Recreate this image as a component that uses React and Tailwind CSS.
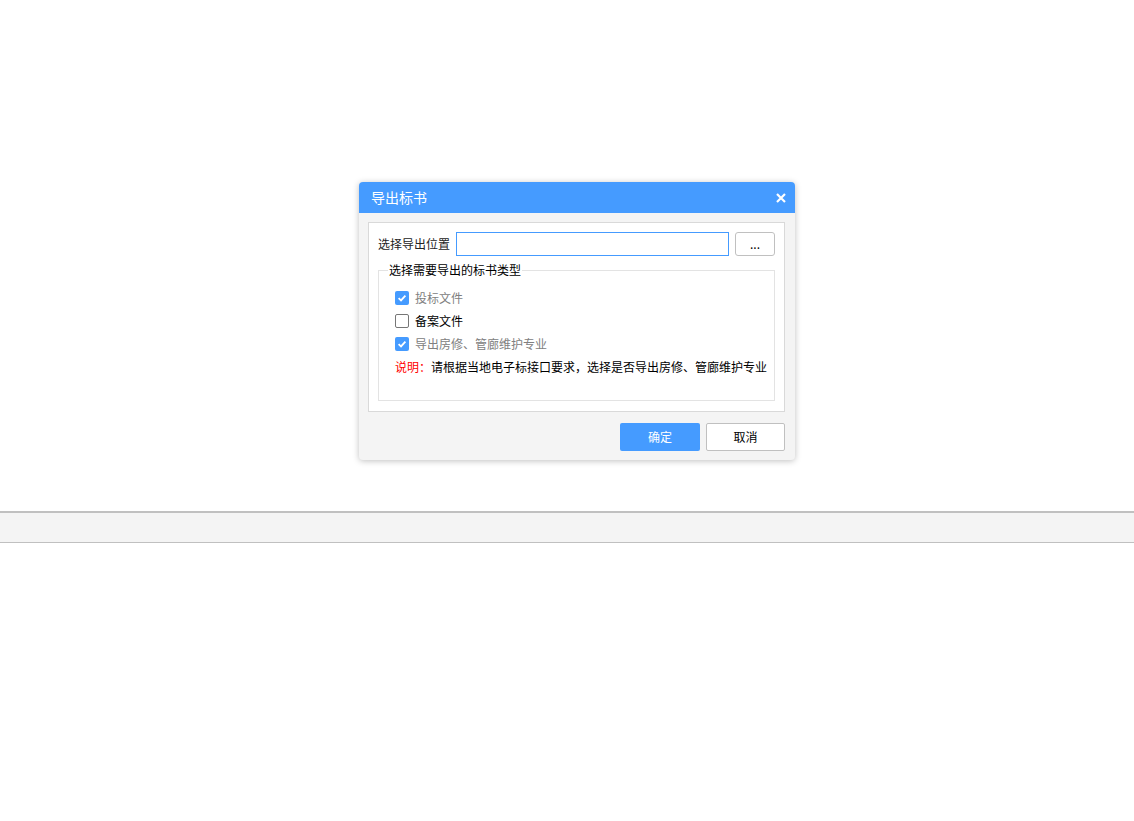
import { useState } from 'react';

const FONT = { fontFamily: '"Microsoft YaHei", "Noto Sans CJK SC", "Noto Sans", sans-serif' };

function Checkbox({ checked, onChange, label }) {
  return (
    <label className="flex items-center h-[23px] cursor-pointer select-none" onClick={onChange}>
      {checked ? (
        <span className="w-[14px] h-[14px] rounded-[2px] bg-[#459bff] flex items-center justify-center">
          <svg width="10" height="10" viewBox="0 0 10 10">
            <path d="M1.6 5.2 L4 7.4 L8.4 2.6" fill="none" stroke="#fff" strokeWidth="1.8" />
          </svg>
        </span>
      ) : (
        <span className="w-[14px] h-[14px] rounded-[2px] border border-[#767676] bg-white" />
      )}
      <span className={`ml-[6px] text-[12px] ${checked ? 'text-[#808080]' : 'text-black'}`}>{label}</span>
    </label>
  );
}

export default function App() {
  const [types, setTypes] = useState({ bid: true, record: false, house: true });
  const toggle = (k) => setTypes((t) => ({ ...t, [k]: !t[k] }));

  return (
    <div className="min-h-[821px] bg-white" style={FONT}>
      <div className="pt-[182px] pl-[359px]">
        {/* Dialog */}
        <div className="w-[436px] rounded-[4px] bg-[#f4f4f4] shadow-[0_1px_6px_rgba(0,0,0,0.25)] overflow-hidden">
          <div className="h-[31px] bg-[#459bff] flex items-center justify-between pl-[12px] pr-[9px]">
            <span className="text-white text-[14px]">导出标书</span>
            <svg width="10" height="10" viewBox="0 0 10 10">
              <path d="M1 1 L9 9 M9 1 L1 9" stroke="#fff" strokeWidth="2.2" />
            </svg>
          </div>

          <div className="pt-[9px] pl-[9px] pr-[10px] pb-[9px]">
            <div className="bg-white border border-[#d9d9d9] pt-[9px] px-[9px] pb-[10px]">
              <div className="flex items-center">
                <span className="text-[12px] text-[#222] w-[78px]">选择导出位置</span>
                <input className="w-[273px] h-[24px] border border-[#459bff] outline-none px-1 text-[12px]" />
                <button className="ml-[6px] w-[40px] h-[24px] border border-[#c0c0c0] rounded-[3px] bg-white text-[12px] leading-none text-black">...</button>
              </div>

              <fieldset className="mt-[7px] border border-[#e3e3e3] pb-[22px] w-[397px]">
                <legend className="ml-[9px] px-[1px] text-[12px] text-black leading-[14px]">选择需要导出的标书类型</legend>
                <div className="pt-[9px] pl-[16px]">
                  <Checkbox checked={types.bid} onChange={() => toggle('bid')} label="投标文件" />
                  <Checkbox checked={types.record} onChange={() => toggle('record')} label="备案文件" />
                  <Checkbox checked={types.house} onChange={() => toggle('house')} label="导出房修、管廊维护专业" />
                  <div className="h-[23px] flex items-center text-[12px] whitespace-nowrap">
                    <span className="text-[#ff0000]">说明：</span>
                    <span className="text-black">请根据当地电子标接口要求，选择是否导出房修、管廊维护专业</span>
                  </div>
                </div>
              </fieldset>
            </div>

            <div className="flex justify-end gap-[6px] mt-[11px]">
              <button className="w-[80px] h-[28px] rounded-[2px] bg-[#459bff] text-white text-[12px]">确定</button>
              <button className="w-[79px] h-[28px] rounded-[2px] bg-white border border-[#c0c0c0] text-black text-[12px]">取消</button>
            </div>
          </div>
        </div>
      </div>

      {/* bottom bar */}
      <div className="mt-[51px] h-[32px] bg-[#f4f4f4] border-t-2 border-b border-[#c0c0c0]" />
    </div>
  );
}
